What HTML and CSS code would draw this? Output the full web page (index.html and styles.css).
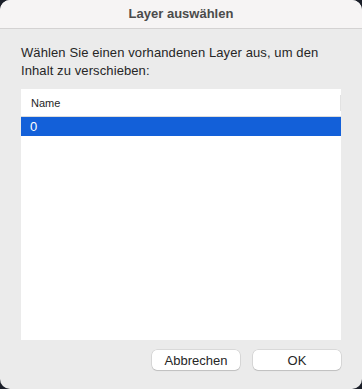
FILE: index.html
```html
<!DOCTYPE html>
<html lang="de">
<head>
  <meta charset="UTF-8">
  <meta name="viewport" content="width=device-width, initial-scale=1.0">
  <title>Layer auswählen</title>
  <link rel="stylesheet" href="styles.css">
</head>
<body>

<div class="window">
  <div class="titlebar">Layer auswählen</div>
  <div class="content">
    <p class="prompt">Wählen Sie einen vorhandenen Layer aus, um den Inhalt zu verschieben:</p>
    <div class="list">
      <div class="list-header">
        <span>Name</span>
        <span class="divider"></span>
      </div>
      <div class="list-row selected">0</div>
    </div>
    <div class="buttons">
      <button class="btn">Abbrechen</button>
      <button class="btn">OK</button>
    </div>
  </div>
</div>

</body>
</html>
```

FILE: styles.css
```css
body {
    margin: 0;
    padding: 0;
    background-color: #1b1f29;
    font-family: 'Liberation Sans', Arial, sans-serif;
}

.window {
    width: 362px;
    height: 389px;
    border-radius: 10px;
    overflow: hidden;
    background-color: #ebebeb;
    display: flex;
    flex-direction: column;
}

.titlebar {
    height: 28px;
    line-height: 28px;
    background-color: #f6f4f4;
    border-bottom: 1px solid #d4d2d2;
    text-align: center;
    font-size: 13px;
    font-weight: bold;
    color: #4b4b4b;
}

.content {
    flex: 1;
    display: flex;
    flex-direction: column;
    padding: 15px 21px 19px 21px;
}

.prompt {
    margin: 0 0 9px 0;
    font-size: 13px;
    line-height: 18px;
    letter-spacing: 0.1px;
    color: #262626;
}

.list {
    flex: 1;
    background-color: #ffffff;
    display: flex;
    flex-direction: column;
}

.list-header {
    height: 27px;
    border-bottom: 1px solid #dcdcdc;
    display: flex;
    align-items: center;
    justify-content: space-between;
    padding-left: 10px;
    font-size: 11px;
    color: #262626;
}

.divider {
    width: 1px;
    height: 16px;
    background-color: #e2e2e2;
}

.list-row {
    height: 19px;
    line-height: 19px;
    padding-left: 9px;
    font-size: 13px;
}

.list-row.selected {
    background-color: #1360d9;
    color: #ffffff;
}

.buttons {
    display: flex;
    justify-content: flex-end;
    gap: 13px;
    margin-top: 10px;
}

.btn {
    width: 88px;
    height: 20px;
    border: none;
    border-radius: 5px;
    background-color: #ffffff;
    box-shadow: 0 0 0 0.5px rgba(0, 0, 0, 0.15), 0 1px 1px rgba(0, 0, 0, 0.12);
    font-family: 'Liberation Sans', Arial, sans-serif;
    font-size: 13px;
    color: #262626;
    padding: 0;
}
```
